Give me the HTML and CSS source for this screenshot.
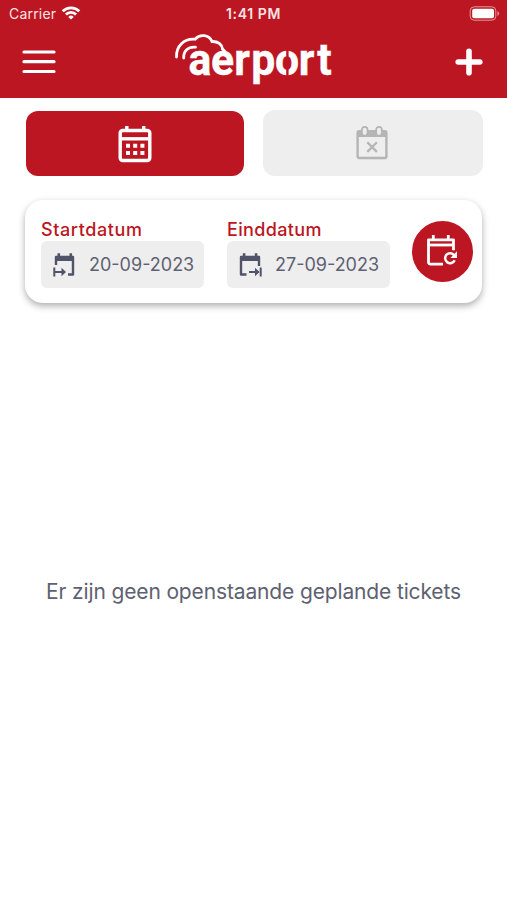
FILE: index.html
```html
<!DOCTYPE html>
<html lang="nl">
<head>
<meta charset="utf-8">
<title>aerport</title>
<link rel="stylesheet" href="styles.css">
</head>
<body>
<header class="header">
  <div class="status">
    <div class="carrier"><span>Carrier</span>
      <svg width="20" height="16" viewBox="0 0 20 16" fill="none" stroke="#fff" stroke-width="2.8"><path d="M1.7 6.2a11.8 11.8 0 0 1 16.6 0M4.9 9.5a7.2 7.2 0 0 1 10.2 0"/><path d="M10 14.6l-2.7-2.7a3.8 3.8 0 0 1 5.4 0z" fill="#fff" stroke="none"/></svg>
    </div>
    <time class="clock">1:41 PM</time>
    <svg class="battery" width="32" height="16" viewBox="0 0 32 16"><rect x="1.2" y=".8" width="25.6" height="13.4" rx="4" fill="none" stroke="#e39a9f"/><rect x="3.2" y="2.8" width="21.8" height="9.4" rx="2" fill="#fff"/><path d="M28.3 5v5q2-.8 2-2.5T28.3 5" fill="#dc8289"/></svg>
  </div>
  <nav class="bar">
    <button class="plain" aria-label="Menu"><svg width="34" height="26" viewBox="0 0 34 26" stroke="#fff" stroke-width="3.2" stroke-linecap="round"><path d="M2 3h30M2 12.7h30M2 22.5h30"/></svg></button>
    <svg class="logo" width="166" height="58" viewBox="0 0 166 58">
      <g fill="none" stroke="#fff" stroke-linecap="round" stroke-width="2.8"><path d="M4.5 26C4 15 12 7.3 23 8.2 28 2.7 37 3.6 40 10.5c6-.3 10 3 10.500 7.500l2.500 2.500"/><path d="M11.700 27C11.400 20 16 15.500 23.500 16.200"/></g>
      <text class="wordmark" transform="scale(.95 1)" x="17.300 41 65.500 83.500 108.500 133.500 152.800" y="44.500">aerport</text>
      <path class="slit" d="M114.200 18h2.400v9h-2.400zM114.200 38h2.400v9h-2.400z"/>
    </svg>
    <button class="plain" aria-label="Toevoegen"><svg width="30" height="30" viewBox="0 0 30 30" stroke="#fff" stroke-width="5.600" stroke-linecap="round"><path d="M15 4.200v21.600M4.200 15h21.600"/></svg></button>
  </nav>
</header>
<main>
  <div class="tabs">
    <button class="tab active" aria-label="Kalender"><svg width="34" height="38" viewBox="0 0 34 38"><path d="M8.800 1v5M25.700 1v5" stroke="#fff" stroke-width="3.400"/><rect x="2.200" y="5.500" width="29.600" height="30" rx="2.500" fill="none" stroke="#fff" stroke-width="3.400"/><path d="M2 13.800h30" stroke="#fff" stroke-width="3.400"/><path d="M8 18.800h4v4H8zm7.200 0h4v4h-4zm7.200 0h4v4h-4zM8 26h4v4H8zm7.200 0h4v4h-4zm7.200 0h4v4h-4z" fill="#fff"/></svg></button>
    <button class="tab" aria-label="Geannuleerd"><svg width="34" height="36" viewBox="0 0 34 36"><rect x="2.600" y="6.200" width="28.800" height="26.800" rx="1.600" fill="none" stroke="#b5b5b5" stroke-width="2.400"/><path d="M2 6h30v6H2z" fill="#b5b5b5"/><g fill="#eee" stroke="#b5b5b5" stroke-width="1.800"><rect x="6.900" y="1.900" width="5.600" height="8.800" rx="2.800"/><rect x="21.200" y="1.900" width="5.600" height="8.800" rx="2.800"/></g><path d="M12.300 17.300l9.600 9.600m0-9.600l-9.600 9.600" stroke="#b5b5b5" stroke-width="2.300"/></svg></button>
  </div>
  <section class="card">
    <div class="field"><label>Startdatum</label>
      <div class="date"><svg width="25" height="26" viewBox="0 0 25 26"><path d="M4 13V5h17v17.500h-5" fill="none" stroke="#505369" stroke-width="2.400" stroke-linejoin="round"/><path d="M3 4h19v5H3zM5.500 1.200h2.600V5H5.500zm12 0h2.600V5h-2.600z" fill="#505369"/><path d="M2.300 15.500v9M2.300 20h10" fill="none" stroke="#505369" stroke-width="2"/><path d="M9.500 15.800l4.500 4.200-4.500 4.200z" fill="#505369"/></svg><span>20-09-2023</span></div>
    </div>
    <div class="field end"><label>Einddatum</label>
      <div class="date"><svg width="25" height="26" viewBox="0 0 25 26"><path d="M8.500 22.500H3V5h18v9" fill="none" stroke="#505369" stroke-width="2.400" stroke-linejoin="round"/><path d="M2 4h20v5H2zM4.800 1.200h2.600V5H4.800zm12 0h2.600V5h-2.600z" fill="#505369"/><path d="M22.700 15.500v9M11 20h10" fill="none" stroke="#505369" stroke-width="2"/><path d="M17 15.800l4.500 4.200-4.500 4.200z" fill="#505369"/></svg><span>27-09-2023</span></div>
    </div>
    <button class="refresh" aria-label="Vernieuwen"><svg width="32" height="34" viewBox="0 0 32 34" fill="none" stroke="#fff"><path d="M7.300 1v4M22.300 1v4M17 30.200H4.500a2 2 0 0 1-2-2V5.800h25v10.500" stroke-width="2.800" stroke-linejoin="round"/><path d="M2.500 11h25" stroke-width="2.800"/><path d="M28.200 21.300a5 5 0 1 0 .5 5" stroke-width="2.500"/><path d="M31 17.200v6.700h-6.600z" fill="#fff" stroke="none"/></svg></button>
  </section>
  <p class="empty">Er zijn geen openstaande geplande tickets</p>
</main>
</body>
</html>
```
FILE: styles.css
```css
* { box-sizing: border-box; }
body { margin: 0; height: 900px; background: #fff; color: #5e6171; font-family: Inter, sans-serif; display: flex; flex-direction: column; }
button { border: 0; padding: 0; margin: 0; background: none; }
svg { display: block; flex: none; }
.header { height: 98px; background: #bc1622; color: #fff; }
.status { height: 28px; display: grid; grid-template-columns: 1fr auto 1fr; align-items: center; padding: 0 6px 0 9px; font-size: 14px; }
.carrier { display: flex; align-items: center; gap: 5px; color: #fbe3e4; letter-spacing: .2px; }
.carrier span { margin-top: -2px; }
.carrier svg { margin-top: -3px; }
.clock { font-size: 14px; font-weight: 600; letter-spacing: .6px; color: #fbe3e4; margin: -1px 3px 0 0; }
.battery { justify-self: end; margin-top: -1px; }
.bar { height: 70px; display: flex; justify-content: space-between; align-items: center; padding: 0 23px 0 22px; }
.plain svg { margin-top: -2px; }
.logo { margin-top: -7px; }
.wordmark { font: 700 45px Roboto, sans-serif; fill: #fff; stroke: #fff; stroke-width: .4px; }
.slit { fill: #bc1622; }
main { flex: 1; display: flex; flex-direction: column; padding: 12px 25px 0; }
.tabs { display: grid; grid-template-columns: 218px 220px; gap: 19px; padding-left: 1px; }
.tab { height: 66px; border-radius: 12px; background: #eee; display: flex; align-items: center; justify-content: center; padding-right: 3px; }
.tab.active { background: #bc1622; height: 65px; margin-top: 1px; padding-right: 0; }
.card { height: 103px; margin-top: 24px; border-radius: 18px; background: #fff; box-shadow: 0 3px 7px rgba(0,0,0,.32); display: flex; align-items: flex-start; padding: 18px 9px 0 16px; }
.field { width: 163px; margin-right: 23px; flex: none; }
.field.end { margin-right: 22px; }
label { display: block; height: 23px; line-height: 23px; font-size: 18px; font-weight: 500; letter-spacing: .6px; color: #bc1622; }
.end label { letter-spacing: .35px; }
.date { height: 47px; border-radius: 6px; background: #eee; display: flex; align-items: center; gap: 12px; padding-left: 11px; font-size: 18px; white-space: nowrap; }
.refresh { width: 61px; height: 61px; margin-top: 3px; border-radius: 50%; background: #bc1622; display: flex; align-items: center; justify-content: center; flex: none; }
.refresh svg { margin: -2px 2px 0 0; }
.empty { margin: auto 0; padding-bottom: 20px; text-align: center; font-size: 21px; letter-spacing: -.14px; white-space: nowrap; }
```
